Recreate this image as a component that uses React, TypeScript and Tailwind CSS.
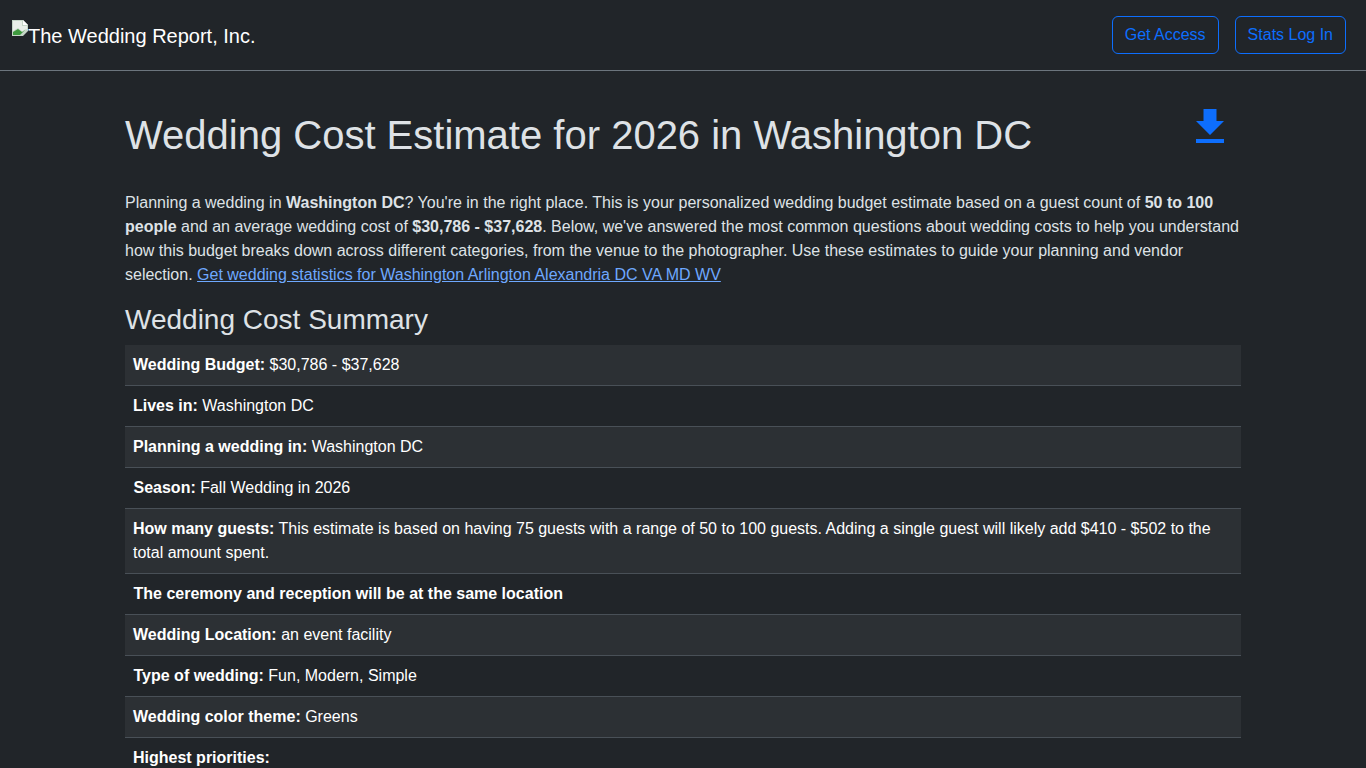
import React from 'react';

const ROWS: { label: string; value?: string; wide?: boolean }[] = [
  { label: 'Wedding Budget:', value: '$30,786 - $37,628' },
  { label: 'Lives in:', value: 'Washington DC' },
  { label: 'Planning a wedding in:', value: 'Washington DC' },
  { label: 'Season:', value: 'Fall Wedding in 2026', wide: true },
  {
    label: 'How many guests:',
    value:
      'This estimate is based on having 75 guests with a range of 50 to 100 guests. Adding a single guest will likely add $410 - $502 to the total amount spent.',
  },
  { label: 'The ceremony and reception will be at the same location', wide: true },
  { label: 'Wedding Location:', value: 'an event facility' },
  { label: 'Type of wedding:', value: 'Fun, Modern, Simple', wide: true },
  { label: 'Wedding color theme:', value: 'Greens' },
  { label: 'Highest priorities:' },
];

const BrokenImage = () => (
  <svg width="16" height="16" viewBox="0 0 16 16" className="shrink-0 self-start">
    <path d="M0 0H11L16 5V11L11 16H0Z" fill="#c6d6c8" />
    <path d="M1 1H10V6H15V9L11 12L6 8L1 11Z" fill="#e9efe9" />
    <path d="M1 15V12L6 9L10 12L14 9L8 15Z" fill="#3f9a3f" />
    <path d="M11 0L16 5H11Z" fill="#ffffff" />
  </svg>
);

const DownloadIcon = () => (
  <svg width="28" height="34" viewBox="0 0 28 34" fill="#0d6efd">
    <path d="M7.5 0H20.5V12H28L14 26L0 12H7.5Z" />
    <rect x="0" y="30" width="28" height="4" />
  </svg>
);

export default function App() {
  return (
    <div className="min-h-screen bg-[#212529] text-[#dee2e6] text-base leading-6 font-['Liberation_Sans',Arial,sans-serif]">
      <nav className="flex h-[71px] items-center justify-between border-b border-[#6c757d] pl-3 pr-5">
        <a className="flex items-start text-xl leading-[30px] text-white">
          <BrokenImage />
          <span className="pt-px">The Wedding Report, Inc.</span>
        </a>
        <div className="flex gap-4">
          <button className="h-[38px] rounded-md border border-[#0d6efd] px-3 text-[#0d6efd]">Get Access</button>
          <button className="h-[38px] rounded-md border border-[#0d6efd] px-3 text-[#0d6efd]">Stats Log In</button>
        </div>
      </nav>

      <main className="mx-auto w-[1140px] px-3">
        <div className="flex items-start justify-between pt-10">
          <h1 className="text-[40px] leading-12 font-normal">Wedding Cost Estimate for 2026 in Washington DC</h1>
          <div className="mr-[17px] -mt-[2px]">
            <DownloadIcon />
          </div>
        </div>

        <p className="mt-8 mb-2">
          Planning a wedding in <b>Washington DC</b>? You're in the right place. This is your personalized wedding
          budget estimate based on a guest count of <b>50 to 100 people</b> and an average wedding cost of{' '}
          <b>$30,786 - $37,628</b>. Below, we've answered the most common questions about wedding costs to help you
          understand how this budget breaks down across different categories, from the venue to the photographer. Use
          these estimates to guide your planning and vendor selection.{' '}
          <a className="text-[#6ea8fe] underline">Get wedding statistics for Washington Arlington Alexandria DC VA MD WV</a>
        </p>

        <h2 className="text-[28px] leading-[34px] font-normal mt-4 mb-2">Wedding Cost Summary</h2>

        <div>
          {ROWS.map((row, i) => (
            <div
              key={i}
              className={`border-b border-[#495057] py-2 text-white ${i % 2 === 0 ? 'bg-[#2c3034]' : ''} ${row.wide ? 'px-[8.5px]' : 'px-2'}`}
            >
              <b>{row.label}</b>
              {row.value ? ` ${row.value}` : ''}
            </div>
          ))}
        </div>
      </main>
    </div>
  );
}
